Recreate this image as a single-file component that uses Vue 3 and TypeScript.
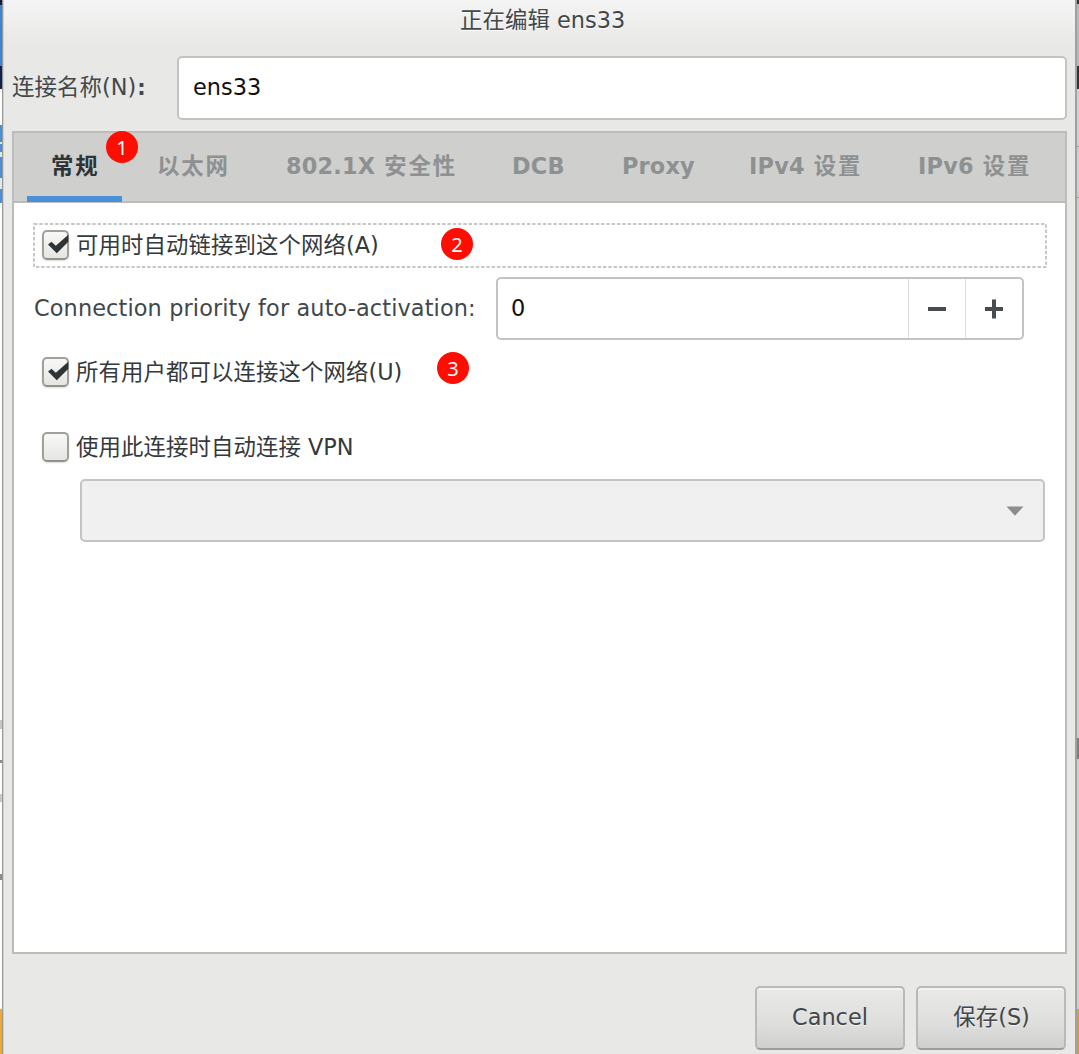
<script setup lang="ts">
import { ref } from 'vue'

interface Tab {
  parts: { text: string; cjk: boolean }[]
  width: number
  badge?: string
}

const tabs: Tab[] = [
  { parts: [{ text: '常规', cjk: true }], width: 106, badge: '1' },
  { parts: [{ text: '以太网', cjk: true }], width: 129 },
  { parts: [{ text: '802.1X ', cjk: false }, { text: '安全性', cjk: true }], width: 226 },
  { parts: [{ text: 'DCB', cjk: false }], width: 110 },
  { parts: [{ text: 'Proxy', cjk: false }], width: 127 },
  { parts: [{ text: 'IPv4 ', cjk: false }, { text: '设置', cjk: true }], width: 169 },
  { parts: [{ text: 'IPv6 ', cjk: false }, { text: '设置', cjk: true }], width: 125 },
]
const active = ref(0)
const name = ref('ens33')
const priority = ref(0)
const autoConnect = ref(true)
const allUsers = ref(true)
const useVpn = ref(false)
</script>

<template>
  <div class="screen">
    <div class="edge left"></div>
    <main class="window">
      <header class="title"><span class="c">正在编辑</span> ens33</header>

      <div class="name-row">
        <label class="name-label"><span class="c">连接名称</span><span class="paren">(N)</span><span class="colon">:</span></label>
        <div class="entry">{{ name }}</div>
      </div>

      <section class="notebook">
        <nav class="tabs">
          <div
            v-for="(tab, i) in tabs"
            :key="i"
            class="tab"
            :class="{ active: i === active }"
            :style="{ width: tab.width + 'px' }"
            @click="active = i"
          >
            <span class="tab-text"><span v-for="(p, j) in tab.parts" :key="j" :class="p.cjk ? 'cb' : 'lb'">{{ p.text }}</span></span>
            <i v-if="tab.badge" class="badge on-tab">{{ tab.badge }}</i>
          </div>
        </nav>

        <div class="page">
          <div class="check-row focus" @click="autoConnect = !autoConnect">
            <svg class="dots" width="1014" height="45" viewBox="0 0 1014 45">
              <rect x="1" y="1" width="1012" height="43" fill="none" stroke="#b4b6b5" stroke-width="1.5" stroke-dasharray="3.4 1.9" />
            </svg>
            <span class="box"><svg v-if="autoConnect" viewBox="0 0 28 30"><path d="M6 14.5 L9.5 11.8 L13.8 15.8 L26.3 4.8 V11.8 L14.8 23.2 Z" fill="#2e3436" /></svg></span>
            <span class="check-text"><span class="c">可用时自动链接到这个网络</span><span class="paren">(A)</span></span>
            <i class="badge b2">2</i>
          </div>

          <div class="priority-row">
            <label class="priority-label">Connection priority for auto-activation:</label>
            <div class="spin">
              <span class="value">{{ priority }}</span>
              <span class="step" @click="priority--"><svg width="20" height="20"><path d="M1 8h18v4H1z" fill="#474c4e" /></svg></span>
              <span class="step" @click="priority++"><svg width="20" height="20"><path d="M1 8h7V.5h4V8h7v4h-7v7.5H8V12H1z" fill="#474c4e" /></svg></span>
            </div>
          </div>

          <div class="check-row users" @click="allUsers = !allUsers">
            <span class="box"><svg v-if="allUsers" viewBox="0 0 28 30"><path d="M6 14.5 L9.5 11.8 L13.8 15.8 L26.3 4.8 V11.8 L14.8 23.2 Z" fill="#2e3436" /></svg></span>
            <span class="check-text"><span class="c">所有用户都可以连接这个网络</span><span class="paren">(U)</span></span>
            <i class="badge b3">3</i>
          </div>

          <div class="check-row vpn" @click="useVpn = !useVpn">
            <span class="box"></span>
            <span class="check-text"><span class="c">使用此连接时自动连接</span> VPN</span>
          </div>

          <div class="combo">
            <svg width="18" height="10" viewBox="0 0 18 10"><path d="M.5 .5h17L9 9.7z" fill="#8b8e8f" /></svg>
          </div>
        </div>
      </section>

      <footer class="actions">
        <button class="btn">Cancel</button>
        <button class="btn save"><span class="c">保存</span><span class="paren">(S)</span></button>
      </footer>
    </main>
    <div class="edge right"></div>
  </div>
</template>

<style>
body { margin: 0; }
</style>

<style scoped>
* { box-sizing: border-box; }
.screen {
  width: 1079px; height: 1054px; display: flex; overflow: hidden;
  font-family: "DejaVu Sans", "Noto Sans CJK SC", sans-serif;
  font-size: 22.4px; line-height: 30px; color: #41474a; white-space: pre;
}
.edge { width: 2px; flex: none; }
.left {
  background: linear-gradient(#101c40 0 5px, #3b84d8 5px 66px, #13204a 66px 89px, #fff 89px 125px,
    #4a90d9 125px 142px, #dbe8f6 142px 144px, #4a90d9 144px 152px, #dbe8f6 152px 157px, #4a90d9 157px 178px,
    #dbe8f6 178px 189px, #4a90d9 189px 203px,
    #fff 203px 720px, #c8c8c8 720px 729px, #fff 729px 760px, #8a8c96 760px 763px, #fff 763px 794px,
    #c8c8c8 794px 802px, #fff 802px 874px, #8a8c90 874px 880px, #fff 880px 1009px, #f5a733 1009px);
}
.right {
  background: linear-gradient(#333 0 4px, #b9b9b9 4px 66px, #333 66px 89px, #d0d0d0 89px 146px, #999 146px 147px,
    #d0d0d0 147px 197px, #999 197px 198px, #cfcfd2 198px 738px, #7e7e80 738px 759px, #cfcfd2 759px 1009px, #d79a3f 1009px);
}
.window {
  flex: 1; display: flex; flex-direction: column; background: #e8e8e6;
  border-left: 1px solid #999a98; border-right: 2px solid #a0a19f; box-shadow: inset 1px 0 #d0d0ce;
  background-image: linear-gradient(#f4f4f4, #e8e8e6 46px); background-repeat: no-repeat; background-size: 100% 46px;
  padding: 0 8px 0 9px;
}
.c { letter-spacing: 0.1px; }
.title { height: 56px; padding: 5px 0 0 448px; text-shadow: 0 1px #fff; }
.name-row { display: flex; height: 64px; flex: none; }
.name-label { width: 165px; padding-top: 16px; }
.colon { font-weight: 700; font-size: 21px; margin-left: 1px; }
.entry {
  width: 890px; border: 2px solid #c3c3c0; border-radius: 5px; background: #fff; color: #101010;
  padding: 14px;
}
.notebook { width: 1055px; height: 823px; margin-top: 11px; border: 2px solid #bcbcba; background: #fff; flex: none; }
.tabs { height: 70px; display: flex; background: #cfcfcd; border-bottom: 2px solid #bcbcba; padding-left: 37px; }
.tab { position: relative; flex: none; font-weight: 700; color: #8e9192; padding-top: 18px; height: 69px; }
.tab.active { color: #2e3436; }
.tab.active::after {
  content: ""; position: absolute; left: -24px; bottom: 0; width: 95px; height: 6px; background: #4a90d9;
}
.lb { letter-spacing: 0.2px; }
.cb { letter-spacing: 1.8px; }
.lb + .cb { margin-left: 1px; }
.badge {
  position: absolute; width: 32px; height: 32px; border-radius: 50%; background: #ff0d00; color: #fff;
  font: normal 400 20px/33px "Noto Sans", sans-serif; text-align: center;
}
.on-tab { left: 55px; top: -2px; }
.page { padding: 20px 19px; }
.check-row { position: relative; display: flex; align-items: center; width: 1014px; height: 45px; padding-left: 9px; }
.dots { position: absolute; left: 0; top: 0; }
.box {
  width: 27px; height: 30px; flex: none; border: 2px solid #a1a19b; border-bottom-color: #92928b; border-radius: 5px;
  background: linear-gradient(#f8f8f7, #e5e5e3); box-shadow: 0 1px 2px #0002; margin-top: -1px;
}
.box svg { display: block; width: 28px; height: 30px; margin: -2px; }
.check-text { margin: -2px 0 0 7px; color: #34393b; }
.b2 { left: 408px; top: 5px; }
.b3 { left: 404px; top: 2px; }
.priority-row { display: flex; height: 64px; margin-top: 9px; }
.priority-label { width: 463px; padding: 16px 0 0 1px; letter-spacing: 0.12px; }
.spin { display: flex; width: 528px; height: 63px; border: 2px solid #c3c3c0; border-radius: 5px; }
.value { flex: 1; padding: 14px 13px; color: #101010; }
.step { width: 57px; border-left: 1px solid #dededc; display: flex; align-items: center; justify-content: center; }
.users { margin-top: 9px; }
.vpn { margin-top: 30px; }
.combo {
  width: 965px; height: 63px; margin: 9px 0 0 47px; border: 2px solid #c3c3c0; border-radius: 5px;
  background: #f0f0f0; display: flex; align-items: center; justify-content: flex-end; padding-right: 19px;
}
.combo svg { margin-top: 1px; }
.actions { display: flex; justify-content: flex-end; gap: 11px; margin-top: 32px; padding-right: 1px; }
.btn {
  width: 150px; height: 64px; border: 2px solid #b9b9b6; border-bottom-color: #9d9d9a; border-radius: 5px;
  background: linear-gradient(#e9e9e7, #dededc 60%, #cfcfcd); box-shadow: inset 0 2px #f4f4f4;
  font: inherit; color: #41474a; padding: 0 0 2px; text-shadow: 0 1px #f4f4f4; white-space: pre;
}
.save { padding-left: 1px; }
</style>
